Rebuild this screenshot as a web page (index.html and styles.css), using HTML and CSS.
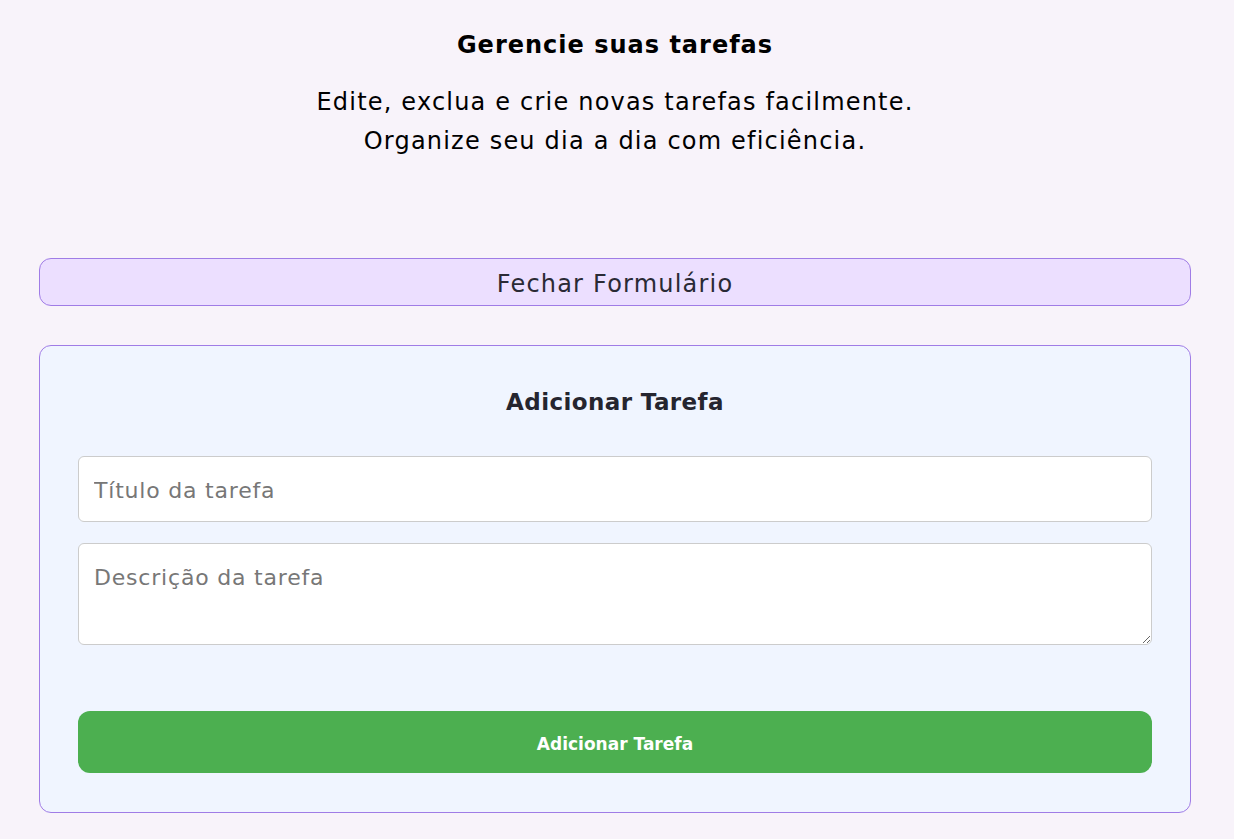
FILE: index.html
```html
<!DOCTYPE html>
<html lang="pt-BR">
<head>
<meta charset="utf-8">
<title>Gerencie suas tarefas</title>
<link rel="stylesheet" href="styles.css">
</head>
<body>
<main class="page">
  <header class="intro">
    <h1 class="intro-title">Gerencie suas tarefas</h1>
    <p class="intro-text">Edite, exclua e crie novas tarefas facilmente.<br>Organize seu dia a dia com eficiência.</p>
  </header>
  <button class="toggle-btn" type="button">Fechar Formulário</button>
  <form class="task-form">
    <h2 class="form-title">Adicionar Tarefa</h2>
    <input class="field field-input" type="text" placeholder="Título da tarefa">
    <textarea class="field field-textarea" placeholder="Descrição da tarefa"></textarea>
    <button class="submit-btn" type="button">Adicionar Tarefa</button>
  </form>
</main>
</body>
</html>
```
FILE: styles.css
```css
* { box-sizing: border-box; }
html, body { margin: 0; padding: 0; }
body {
  background: #f8f3fa;
  font-family: "DejaVu Sans", "Open Sans", sans-serif;
  color: #000;
}
.page {
  padding: 29px 43px 25px 39px;
  display: flex;
  flex-direction: column;
}
.intro { text-align: center; }
.intro-title {
  margin: 0;
  font-family: "DejaVu Sans", sans-serif;
  font-weight: 700;
  font-size: 24px;
  letter-spacing: 1px;
  line-height: 32px;
}
.intro-text {
  margin: 22px 0 0;
  font-size: 24px;
  letter-spacing: 1.2px;
  line-height: 39px;
  font-weight: 400;
}
.toggle-btn {
  margin-top: 97px;
  height: 48px;
  width: 100%;
  padding: 4px 0 0;
  border: 1px solid #a07ce6;
  border-radius: 12px;
  background: #ecdfff;
  font-family: "DejaVu Sans", sans-serif;
  font-size: 24px;
  letter-spacing: 1.2px;
  font-weight: 400;
  color: #2a2a35;
  cursor: pointer;
}
.task-form {
  margin-top: 39px;
  border: 1px solid #a07ce6;
  border-radius: 12px;
  background: #f0f5ff;
  padding: 41px 38px 39px;
  display: flex;
  flex-direction: column;
}
.form-title {
  margin: 0 0 39px;
  text-align: center;
  font-family: "DejaVu Sans", sans-serif;
  font-size: 23px;
  letter-spacing: 0.4px;
  line-height: 30px;
  font-weight: 700;
  color: #25252f;
}
.field {
  width: 100%;
  border: 1px solid #cccccc;
  border-radius: 6px;
  background: #fff;
  font-family: "DejaVu Sans", sans-serif;
  font-size: 22px;
  letter-spacing: 0.8px;
  color: #333;
  padding: 2px 15px 0;
}
.field::placeholder { color: #777; }
.field-input { height: 66px; }
.field-textarea {
  margin-top: 21px;
  height: 102px;
  padding-top: 21px;
  resize: vertical;
  display: block;
}
.submit-btn {
  margin-top: 66px;
  height: 62px;
  width: 100%;
  padding: 4px 0 0;
  border: none;
  border-radius: 12px;
  background: #4caf50;
  color: #fff;
  font-family: "DejaVu Sans", sans-serif;
  font-size: 17px;
  font-weight: 700;
  cursor: pointer;
}
```
